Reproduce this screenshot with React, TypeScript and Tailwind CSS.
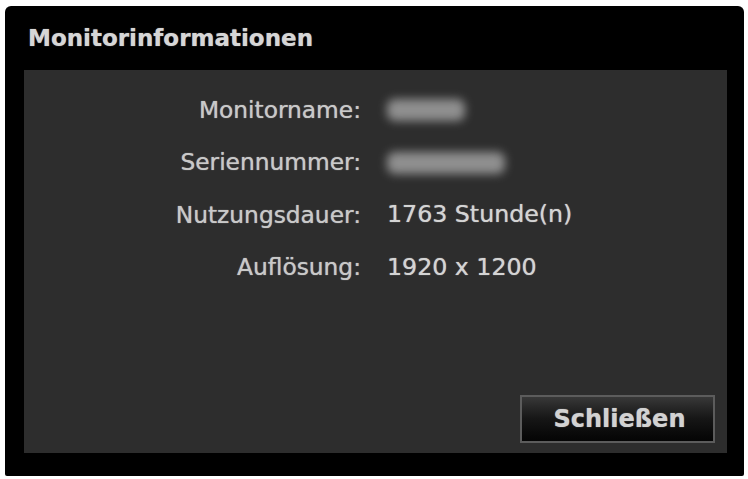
import React from "react";

const rows: { label: string; value?: string; blob?: number }[] = [
  { label: "Monitorname:", blob: 78 },
  { label: "Seriennummer:", blob: 118 },
  { label: "Nutzungsdauer:", value: "1763 Stunde(n)" },
  { label: "Auflösung:", value: "1920 x 1200" },
];

export default function App() {
  return (
    <div
      className="w-[748px] h-[479px] bg-white pl-[5px] pt-[6px] pr-[4px] pb-[3px]"
      style={{ fontFamily: "'DejaVu Sans', Verdana, sans-serif" }}
    >
      <div className="w-full h-full bg-black rounded-t-[6px] rounded-b-[2px] flex flex-col">
        <div className="h-[64px] pl-[23px] pt-[17px] text-[23px] font-bold text-[#d6d6d6] leading-[30px] [text-shadow:0_0_1px_rgba(220,220,220,0.7)]">
          Monitorinformationen
        </div>
        <div className="ml-[19px] mr-[17px] mb-[23px] flex-1 bg-[#2d2d2d] flex flex-col">
          <div className="pt-[14px] flex flex-col">
            {rows.map((r) => (
              <div key={r.label} className="h-[52.5px] flex items-center">
                <div className="w-[337px] text-right text-[23.3px] text-[#c9c9c9] [text-shadow:0_0_1px_rgba(210,210,210,0.8)]">
                  {r.label}
                </div>
                <div className="ml-[26px] text-[23.7px] text-[#d4d4d4] [text-shadow:0_0_1px_rgba(220,220,220,0.8)]">
                  {r.value ? (
                    r.value
                  ) : (
                    <div
                      className="h-[22px] rounded-[8px] bg-[#9a9a9a] blur-[5px] opacity-90"
                      style={{ width: r.blob }}
                    />
                  )}
                </div>
              </div>
            ))}
          </div>
          <div className="mt-auto self-end mr-[12px] mb-[10px] w-[195px] h-[48px] border-2 border-[#5c5c5c] bg-linear-to-b from-[#383838] via-[#161616] to-[#050505] flex items-center justify-center pl-[4px] text-[24px] font-bold text-[#d2d2d2] [text-shadow:0_0_1px_rgba(220,220,220,0.7)]">
            Schließen
          </div>
        </div>
      </div>
    </div>
  );
}
